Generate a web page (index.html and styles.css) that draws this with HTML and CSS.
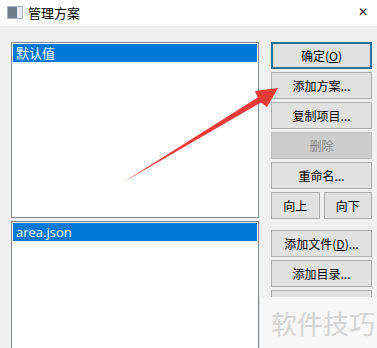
FILE: index.html
```html
<!DOCTYPE html>
<html lang="zh-CN">
<head>
  <meta charset="UTF-8" />
  <title>管理方案</title>
  <link rel="stylesheet" href="styles.css">
</head>
<body>

<div class="window">
  <div class="titlebar">
    <span class="app-icon"><span class="app-icon-dark"></span></span>
    <span class="title">管理方案</span>
    <span class="close">&#x2715;</span>
  </div>

  <div class="content">
    <div class="lists">
      <div class="listbox top">
        <div class="item selected">默认值</div>
      </div>
      <div class="listbox bottom">
        <div class="item selected latin">area.json</div>
      </div>
    </div>

    <div class="buttons">
      <button class="btn default">确定(<u>O</u>)</button>
      <button class="btn">添加方案...</button>
      <button class="btn">复制项目...</button>
      <button class="btn disabled">删除</button>
      <button class="btn">重命名...</button>
      <div class="btn-row">
        <button class="btn">向上</button>
        <button class="btn">向下</button>
      </div>
      <button class="btn spaced">添加文件(<u>D</u>)...</button>
      <button class="btn">添加目录...</button>
      <button class="btn"></button>
    </div>
  </div>

  <svg class="arrow" width="377" height="348" viewBox="0 0 377 348">
    <polygon points="122,183 257.7,97.4 255,91 278,88 267,107 260.9,102.6" fill="#e83a36"/>
  </svg>

  <div class="watermark">软件技巧</div>
</div>

</body>
</html>
```

FILE: styles.css
```css
body {
  margin: 0;
  font-family: "Noto Sans CJK SC", sans-serif;
  background: #f0f0f0;
}

.window {
  position: relative;
  width: 377px;
  height: 348px;
  overflow: hidden;
  background: #f0f0f0;
}

.titlebar {
  height: 26px;
  background: #fff;
  display: flex;
  align-items: center;
  padding-left: 7px;
}

.app-icon {
  width: 14px;
  height: 11px;
  border: 1px solid #a9b1ba;
  background: #e4eaf0;
  display: flex;
  margin-top: -2px;
}

.app-icon-dark {
  width: 9px;
  background: #6d7c8a;
}

.title {
  margin-left: 5px;
  font-size: 13px;
  color: #000;
  margin-top: -2px;
}

.close {
  margin-left: auto;
  margin-right: 9px;
  font-size: 12px;
  color: #222;
  font-family: "DejaVu Sans", sans-serif;
  margin-top: -3px;
}

.content {
  display: flex;
  gap: 12px;
  padding: 16px 0 0 11px;
}

.lists {
  display: flex;
  flex-direction: column;
  gap: 3px;
}

.listbox {
  background: #fff;
  border: 1px solid #828790;
  padding: 1px 0 0 1px;
  box-sizing: border-box;
  width: 248px;
}

.listbox.top {
  height: 176px;
}

.listbox.bottom {
  height: 140px;
}

.item {
  height: 18px;
  line-height: 18px;
  width: 244px;
  padding-left: 3px;
  box-sizing: border-box;
  font-size: 13px;
}

.item.selected {
  background: #0078d7;
  color: #fff;
}

.item.latin {
  font-family: "Open Sans", "Noto Sans", sans-serif;
  font-size: 13px;
}

.buttons {
  width: 101px;
  display: flex;
  flex-direction: column;
  gap: 3px;
}

.btn {
  height: 27px;
  width: 100%;
  background: #e1e1e1;
  border: 1px solid #adadad;
  font-family: "Noto Sans CJK SC", sans-serif;
  font-size: 12px;
  color: #000;
  padding: 0;
  margin: 0;
}

.btn.default {
  border: 2px solid #2e6e8e;
}

.btn.disabled {
  background: #cccccc;
  border-color: #bfbfbf;
  color: #8a8a8a;
}

.btn-row {
  display: flex;
  gap: 4px;
}

.btn-row .btn {
  width: 48px;
  flex: 1;
}

.btn.spaced {
  margin-top: 8px;
}

.arrow {
  position: absolute;
  left: 0;
  top: 0;
  pointer-events: none;
}

.watermark {
  position: absolute;
  left: 259px;
  top: 297px;
  width: 118px;
  height: 51px;
  background: #f7f7f7;
  border-left: 1px solid #e4e4e4;
  box-sizing: border-box;
  padding-left: 11px;
  font-size: 26px;
  line-height: 51px;
  color: #d4d4d4;
  white-space: nowrap;
}
```
